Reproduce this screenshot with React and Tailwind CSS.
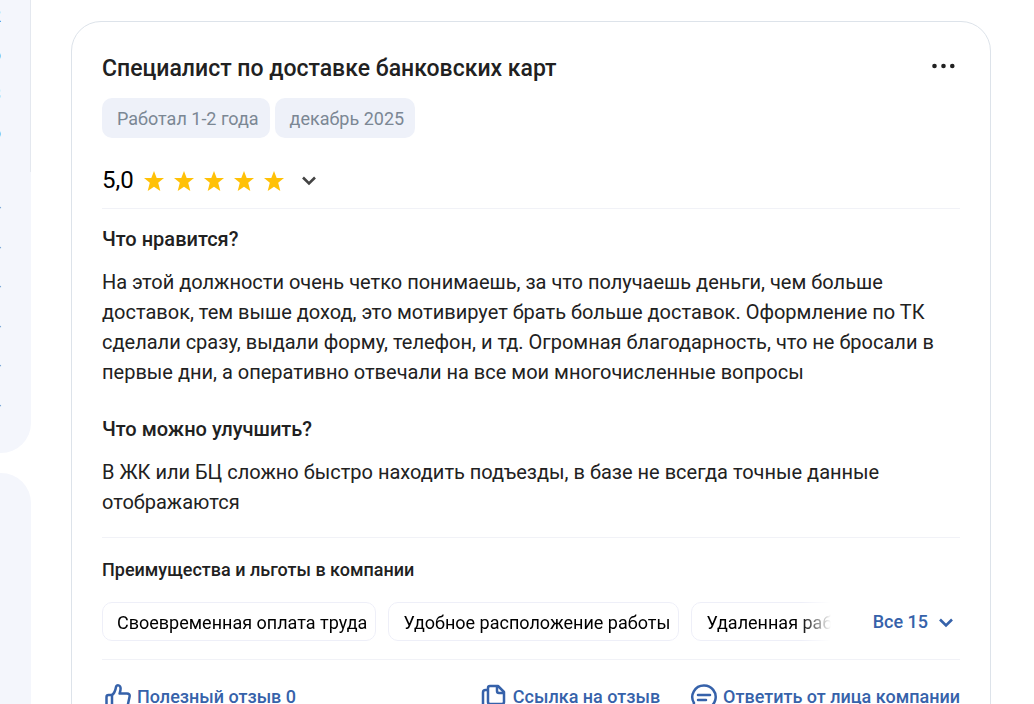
import React from "react";

const STATS = ["2", "о", "3", "о"];
const LINKS = ["-", "-", "-", "-", "-", "-"];

function Chevron() {
  return (
    <svg width="16" height="16" viewBox="0 0 16 16" fill="none" stroke="currentColor" strokeWidth="2.6" aria-hidden="true">
      <path d="M2 5.500l6 6 6-6" />
    </svg>
  );
}

function Star() {
  return (
    <svg width="20" height="20" viewBox="0 0 20 20" fill="#ffc107" aria-hidden="true">
      <path d="M10 0l2.700 7H20l-5.800 4.800L16.300 20 10 15.700 3.700 20l2.100-8.200L0 7h7.300z" />
    </svg>
  );
}

function ThumbIcon() {
  return (
    <svg width="28" height="28" viewBox="0 0 28 28" fill="none" stroke="currentColor" strokeWidth="2.500" strokeLinejoin="round" strokeLinecap="round" aria-hidden="true">
      <path d="M8 12H4.500Q2.500 12 2.500 14v10q0 2 2 2H8z" />
      <path d="M8 12c3-2 3.500-5 4-8 .4-2.600 4.600-2.200 4.600 1.500 0 2-.6 3.500-1 5H23c2 0 3 1.300 2.600 3l-2 9.500c-.4 1.800-1.600 3-3.600 3H8" />
    </svg>
  );
}

function CopyIcon() {
  return (
    <svg width="28" height="28" viewBox="0 0 28 28" fill="none" stroke="currentColor" strokeWidth="2.500" strokeLinejoin="round" aria-hidden="true">
      <path d="M10 3h8l6 6v10q0 2-2 2H10q-2 0-2-2V5q0-2 2-2z" />
      <path d="M17 3v5q0 2 2 2h5" />
      <path d="M8 7H5.500Q3 7 3 9.500V22q0 4 4 4h11" />
    </svg>
  );
}

function CommentIcon() {
  return (
    <svg width="28" height="28" viewBox="0 0 28 28" fill="none" stroke="currentColor" strokeWidth="2.500" strokeLinecap="round" strokeLinejoin="round" aria-hidden="true">
      <path d="M14 2.500A11.500 11.500 0 1 1 8.500 24L3 25l1-5A11.500 11.500 0 0 1 14 2.500z" />
      <path d="M8 12h12M8 17h8" />
    </svg>
  );
}

function Tag({ children }) {
  return <span className="rounded-[10px] bg-[#eef1f9] pt-[9px] pr-[11px] pb-[7px] pl-[15px] text-lg leading-6 text-[#7b8794]">{children}</span>;
}

function Perk({ children }) {
  return <li className="shrink-0 whitespace-nowrap rounded-[10px] border border-[#eeeff8] pt-[7px] pr-2 pb-[5px] pl-[14px] text-lg leading-[25px] text-black">{children}</li>;
}

function Answer({ title, children }) {
  return (
    <section>
      <h3 className="text-xl font-medium leading-[30px]">{title}</h3>
      <p className="mt-[13px] text-xl leading-[30px]">{children}</p>
    </section>
  );
}

export default function App() {
  return (
    <div className="flex h-screen overflow-hidden bg-white font-['Roboto',sans-serif] text-[#212121]">
      <aside className="-ml-[269px] flex w-[300px] shrink-0 flex-col gap-5 text-right text-lg">
        <div className="h-[453px] shrink-0 rounded-br-[30px] bg-[#f4f6fc]">
          <ul className="h-[172px] border-r border-[#e4e8ef] pr-[29px] text-[#3662aa]">
            {STATS.map((s, i) => <li key={i} className="h-[39px] leading-8">{s}</li>)}
          </ul>
          <ul className="flex h-[252px] flex-col justify-between pt-[15px] pr-[30px] text-[#7b8794]">
            {LINKS.map((s, i) => <li key={i} className="h-[39px] leading-[39px]">{s}</li>)}
          </ul>
        </div>
        <div className="grow rounded-tr-[30px] bg-[#f4f6fc]" />
      </aside>
      <main className="min-w-0 grow pt-[21px] pr-[43px] pl-10">
        <article className="rounded-[30px] border border-[#dde3ea] px-[30px] pt-8 pb-8">
          <header className="flex items-start justify-between">
            <h2 className="text-[23px] font-medium leading-[30px]">Специалист по доставке банковских карт</h2>
            <button type="button" aria-label="Ещё" className="p-1">
              <svg width="24" height="16" viewBox="0 0 24 16" fill="currentColor" aria-hidden="true">
                <circle cx="2.500" cy="8" r="2.300" /><circle cx="11.500" cy="8" r="2.300" /><circle cx="20.300" cy="8" r="2.300" />
              </svg>
            </button>
          </header>
          <div className="mt-[14px] flex gap-[5px]">
            <Tag>Работал 1-2 года</Tag>
            <Tag>декабрь 2025</Tag>
          </div>
          <button type="button" className="mt-[27px] flex items-center text-2xl leading-[30px] text-black" aria-label="Оценка 5,0">
            <span>5,0</span>
            <span className="ml-[10px] flex gap-[10px] pt-[2px]">
              <Star /><Star /><Star /><Star /><Star />
            </span>
            <span className="ml-[17px] text-[#444]"><Chevron /></span>
          </button>
          <div className="mt-[13px] border-y border-[#f1f2f7] pt-[15px] pb-5">
            <Answer title="Что нравится?">
              На этой должности очень четко понимаешь, за что получаешь деньги, чем больше доставок, тем выше доход, это мотивирует брать больше доставок. Оформление по ТК сделали сразу, выдали форму, телефон, и тд. Огромная благодарность, что не бросали в первые дни, а оперативно отвечали на все мои многочисленные вопросы
            </Answer>
            <div className="h-[27px]" />
            <Answer title="Что можно улучшить?">
              В ЖК или БЦ сложно быстро находить подъезды, в базе не всегда точные данные отображаются
            </Answer>
          </div>
          <section className="border-b border-[#f1f2f7] pt-5 pb-[18px]">
            <h3 className="text-lg font-medium leading-6">Преимущества и льготы в компании</h3>
            <div className="mt-5 flex items-center">
              <ul className="flex min-w-0 grow gap-3 overflow-hidden mask-[linear-gradient(to_right,black_calc(100%-30px),transparent)]">
                <Perk>Своевременная оплата труда</Perk>
                <Perk>Удобное расположение работы</Perk>
                <Perk>Удаленная работа</Perk>
              </ul>
              <button type="button" className="mr-[6px] ml-[42px] flex shrink-0 items-center gap-[10px] pt-px text-lg font-medium leading-6 text-[#3662aa]">
                Все 15 <Chevron />
              </button>
            </div>
          </section>
          <footer className="flex items-center gap-[30px] pt-[23px] pl-[2px] text-lg font-medium text-[#3662aa]">
            <button type="button" className="mr-auto flex items-center gap-[5px]"><ThumbIcon />Полезный отзыв 0</button>
            <button type="button" className="flex items-center gap-[5px]"><CopyIcon />Ссылка на отзыв</button>
            <button type="button" className="flex items-center gap-[5px]"><CommentIcon />Ответить от лица компании</button>
          </footer>
        </article>
      </main>
    </div>
  );
}
